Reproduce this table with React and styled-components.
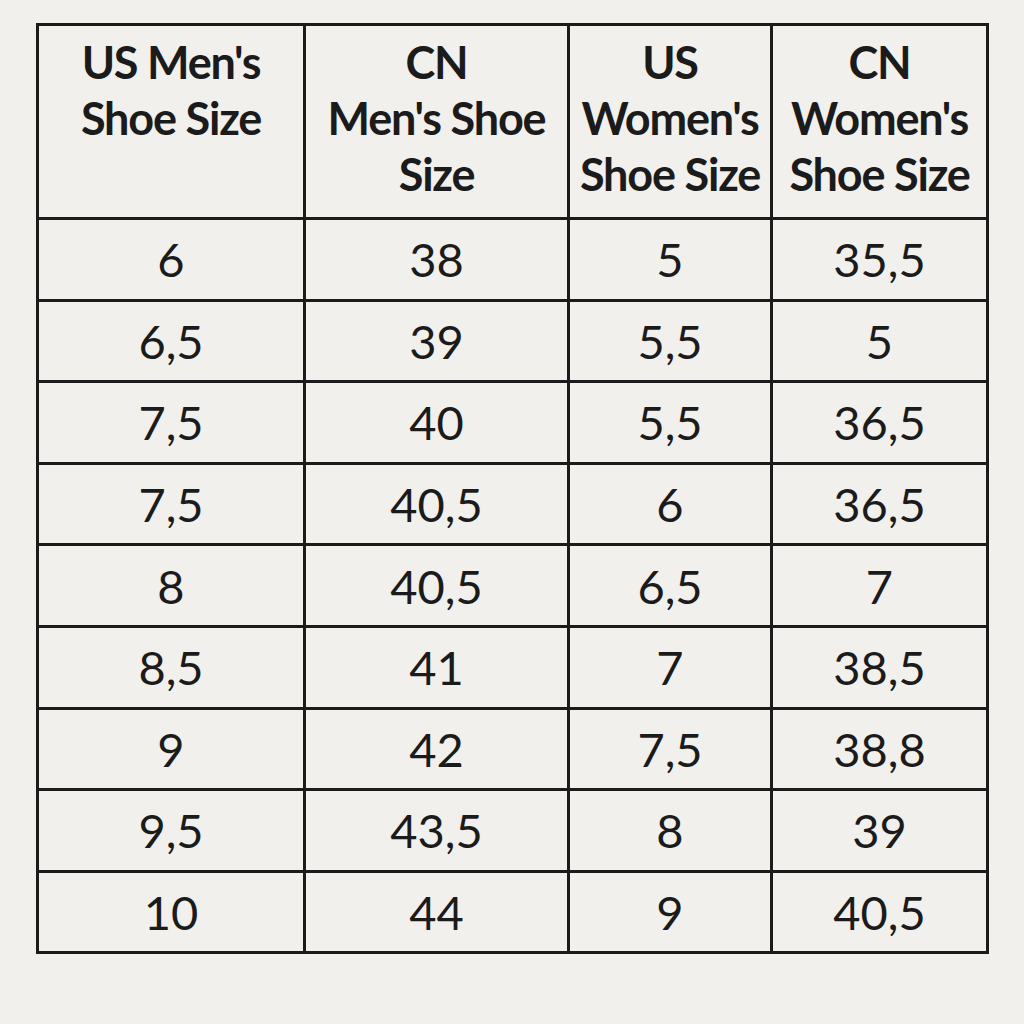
import styled, { createGlobalStyle } from "styled-components";

const GlobalStyle = createGlobalStyle`
  html, body {
    margin: 0;
    padding: 0;
    background: #f1f0ed;
  }
  body {
    font-family: Lato, "Open Sans", "Noto Sans", sans-serif;
    color: #1b1b1b;
  }
`;

const Page = styled.div`
  width: 1024px;
  height: 1024px;
  padding: 23px 0 0 36px;
  box-sizing: border-box;
`;

const Table = styled.table`
  border-collapse: collapse;
  table-layout: fixed;
  width: 950px;
  border: 3px solid #1b1b1b;
`;

const HeadCell = styled.th`
  border: 3px solid #1b1b1b;
  height: 183px;
  padding: 8px 0 0;
  vertical-align: top;
  text-align: center;
  font-weight: 700;
  font-size: 45px;
  line-height: 56px;
  letter-spacing: -1.2px;
`;

const Cell = styled.td`
  border: 3px solid #1b1b1b;
  height: 78.6px;
  padding: 0;
  text-align: center;
  vertical-align: middle;
  font-size: 47px;
  font-weight: 400;
`;

const COLUMNS = [
  { width: 267, title: ["US Men's", "Shoe Size"] },
  { width: 264, title: ["CN", "Men's Shoe", "Size"] },
  { width: 203, title: ["US", "Women's", "Shoe Size"] },
  { width: 216, title: ["CN", "Women's", "Shoe Size"] },
];

const ROWS = [
  ["6", "38", "5", "35,5"],
  ["6,5", "39", "5,5", "5"],
  ["7,5", "40", "5,5", "36,5"],
  ["7,5", "40,5", "6", "36,5"],
  ["8", "40,5", "6,5", "7"],
  ["8,5", "41", "7", "38,5"],
  ["9", "42", "7,5", "38,8"],
  ["9,5", "43,5", "8", "39"],
  ["10", "44", "9", "40,5"],
];

export default function App() {
  return (
    <>
      <GlobalStyle />
      <Page>
        <Table>
          <colgroup>
            {COLUMNS.map((col, i) => (
              <col key={i} style={{ width: col.width }} />
            ))}
          </colgroup>
          <thead>
            <tr>
              {COLUMNS.map((col, i) => (
                <HeadCell key={i}>
                  {col.title.map((line, j) => (
                    <div key={j}>{line}</div>
                  ))}
                </HeadCell>
              ))}
            </tr>
          </thead>
          <tbody>
            {ROWS.map((row, r) => (
              <tr key={r}>
                {row.map((value, c) => (
                  <Cell key={c}>{value}</Cell>
                ))}
              </tr>
            ))}
          </tbody>
        </Table>
      </Page>
    </>
  );
}
